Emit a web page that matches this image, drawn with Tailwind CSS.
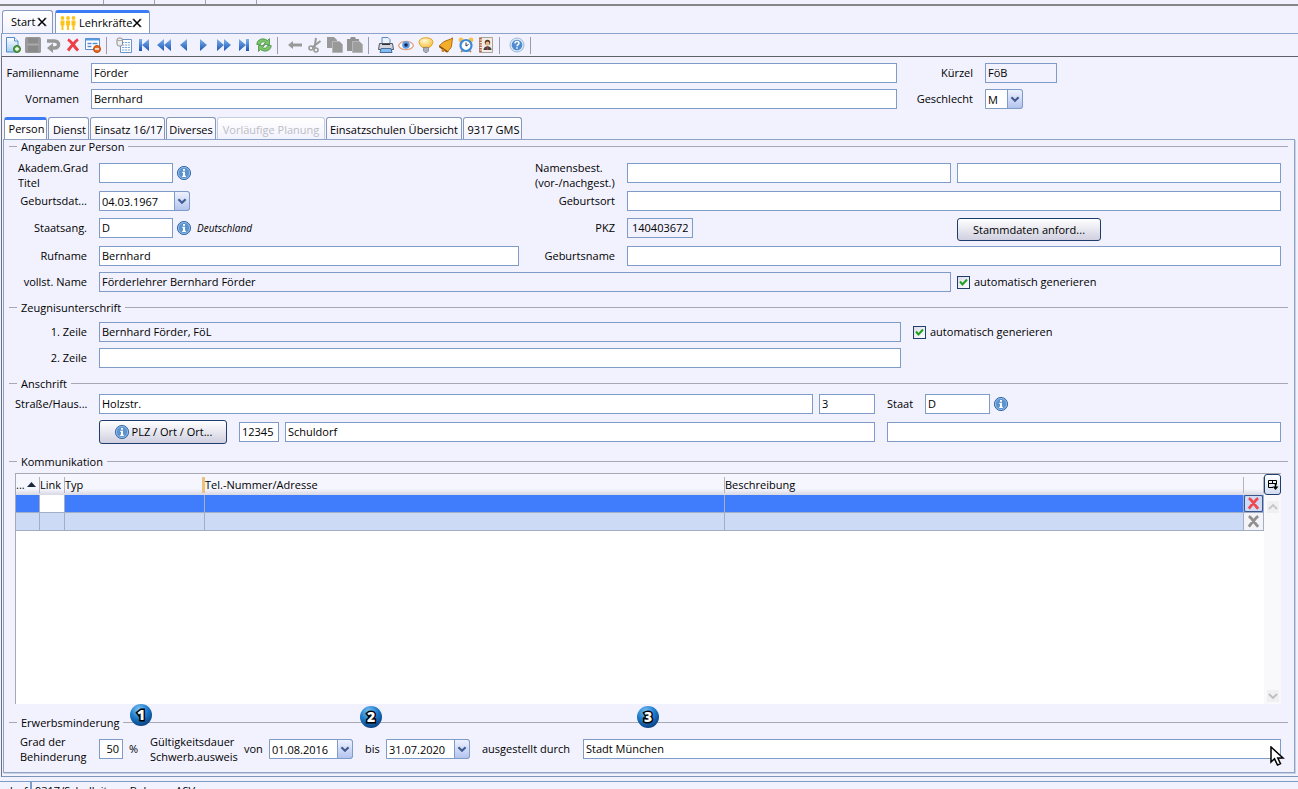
<!DOCTYPE html>
<html lang="de">
<head>
<meta charset="utf-8">
<title>Lehrkräfte</title>
<script src="https://cdn.jsdelivr.net/npm/@tailwindcss/browser@4"></script>
</head>
<body class="h-screen overflow-hidden flex flex-col bg-[#f2f2fe] text-black text-[11px] leading-5 font-['Open_Sans','Noto_Sans',sans-serif]">

<svg class="absolute w-0 h-0" aria-hidden="true">
  <defs>
    <linearGradient id="blue" x1="0" y1="0" x2="0" y2="1"><stop offset="0" stop-color="#7db2ee"/><stop offset="1" stop-color="#1c55b4"/></linearGradient>
    <linearGradient id="paper" x1="0" y1="0" x2="0" y2="1"><stop offset="0" stop-color="#ffffff"/><stop offset="1" stop-color="#a4cdf3"/></linearGradient>
    <radialGradient id="ball" cx=".4" cy=".25" r=".8"><stop offset="0" stop-color="#7cc4f4"/><stop offset=".5" stop-color="#1f7ccc"/><stop offset="1" stop-color="#083a78"/></radialGradient>
    <radialGradient id="lamp" cx=".4" cy=".3" r=".8"><stop offset="0" stop-color="#fffbd8"/><stop offset="1" stop-color="#f6b92c"/></radialGradient>
  </defs>
  <symbol id="info" viewBox="0 0 16 16"><circle cx="8" cy="8" r="6.600" fill="#5b93cf" stroke="#3c6ca8"/><circle cx="8" cy="8" r="5.600" fill="none" stroke="#a9caec" stroke-width=".7"/><path d="M7 4h2v1.700H7zM6.300 6.800H9v4h.9V12H6.200v-1.200H7V8h-.7z" fill="#fff"/></symbol>
  <symbol id="chev" viewBox="0 0 15 20"><path d="M3.500 8l4 4 4-4" fill="none" stroke="#435d92" stroke-width="2.400"/></symbol>
  <symbol id="close" viewBox="0 0 10 10"><path d="M1.500 1.500l7 7M8.500 1.500l-7 7" stroke="#000" stroke-width="1.500"/><path d="M.5 1.300h2M7.500 1.300h2M.5 8.700h2M7.500 8.700h2" stroke="#000" stroke-width=".7"/></symbol>
  <symbol id="cross" viewBox="0 0 16 16"><path d="M3 2.500c2 1 3.500 3 5 5 1.500-2 3-4 5-5M3 13.500c1.500-2 3-4 5-6 1.500 2 3 4 5 6" fill="none" stroke="currentColor" stroke-width="3"/></symbol>
</svg>

<!-- upper window edge -->
<div class="shrink-0 h-[6px] border-b-2 border-[#85858a] flex">
  <span class="w-[104px] border-r border-[#a0a0b0]"></span><span class="w-[51px] border-r border-[#a0a0b0]"></span><span class="w-[51px] border-r border-[#a0a0b0]"></span><span class="w-[51px] border-r border-[#a0a0b0]"></span>
</div>

<!-- window tabs -->
<nav class="shrink-0 h-[27px] flex items-end gap-0.5 pl-0.5" aria-label="Fenster">
  <button type="button" class="h-[23px] w-[51px] flex items-center gap-0.5 pl-2 bg-linear-to-b from-white to-[#f2f2fe] border border-b-0 border-[#8398ba] rounded-t-[3px]">Start<svg class="size-[10px] shrink-0"><use href="#close"/></svg></button>
  <button type="button" class="h-[23px] w-[95px] leading-[18px] flex items-center pl-[3px] bg-white border border-b-0 border-t-3 border-[#8398ba] border-t-[#3b7bf5] rounded-t-[3px]">
    <svg class="w-[18px] h-4 mr-0.5 shrink-0" viewBox="0 0 18 16"><g fill="#fbc31c"><circle cx="3.500" cy="3" r="1.900"/><circle cx="9" cy="3" r="1.900"/><circle cx="14.500" cy="3" r="1.900"/><path d="M1.500 5.500h4v5h-1V15h-2v-4.500h-1zM7 5.500h4v5h-1V15H8v-4.500H7zM12.500 5.500h4v5h-1V15h-2v-4.500h-1z"/></g></svg>Lehrkräfte<svg class="size-[10px] shrink-0"><use href="#close"/></svg></button>
</nav>

<!-- toolbar -->
<div role="toolbar" class="shrink-0 h-6 flex items-center pl-px ml-px border-t border-b border-l border-t-[#8ba3cb] border-b-[#606068] border-l-[#8398ba]">
  <button type="button" class="w-5 flex justify-center" aria-label="Neu"><svg class="size-4" viewBox="0 0 16 16"><path d="M1.500.5h8l3.500 3.500v11H1.500z" fill="url(#paper)" stroke="#4f8ccb"/><path d="M9.500.5V4H13" fill="#fff" stroke="#4f8ccb"/><circle cx="12" cy="12" r="3.500" fill="#5aa844" stroke="#36762a"/><path d="M12 10v4M10 12h4" stroke="#fff" stroke-width="1.300"/></svg></button>
  <button type="button" class="w-5 flex justify-center" aria-label="Speichern"><svg class="size-4" viewBox="0 0 16 16"><path d="M0 1.500L1 0h14l1 1.500V15l-1 1H1l-1-1z" fill="#999"/><path d="M3 1h10v5H3zM3 9h10v6H3z" fill="#8a8a8a"/><path d="M2 7.500h12" stroke="#aaa"/></svg></button>
  <button type="button" class="w-5 flex justify-center" aria-label="Rückgängig"><svg class="size-4" viewBox="0 0 16 16"><path d="M2 4h7.500c5.500 0 5.500 7 0 7H7" fill="none" stroke="#979797" stroke-width="3.400"/><path d="M8 6v10l-6-5z" fill="#979797"/></svg></button>
  <button type="button" class="w-5 flex justify-center text-[#ee4044]" aria-label="Löschen"><svg class="size-4"><use href="#cross"/></svg></button>
  <button type="button" class="w-5 flex justify-center" aria-label="Zeile entfernen"><svg class="size-4" viewBox="0 0 16 16"><path d="M.5 1.500h14v11H.5z" fill="#fff" stroke="#5b8cc9"/><path d="M.5 1.500h14v2H.5z" fill="#5b9be0"/><path d="M2.500 6.500h4m1 0h5M2.500 9.500h4" stroke="#5b8cc9" stroke-width="1.500"/><circle cx="12" cy="12" r="3.500" fill="#ee6a1e" stroke="#b94a10"/><path d="M10 12h4" stroke="#fff" stroke-width="1.500"/></svg></button>
  <span class="w-[11px] pl-[3px]"><span class="block w-px h-[17px] bg-[#9a9aae]"></span></span>
  <button type="button" class="w-5 flex justify-center" aria-label="Liste"><svg class="size-4" viewBox="0 0 16 16"><path d="M4.500 2.500h11v13h-11z" fill="#fff" stroke="#6a93c6"/><path d="M6 5.500h8M6 8h8M6 10.500h8M6 13h8" stroke="#7ba6da"/><path d="M8.500 4v11M11.500 4v11" stroke="#fff" stroke-width=".7"/><rect x="1" y="1" width="5.500" height="8" rx="2" fill="#eee" stroke="#8d8d8d"/><path d="M1 3.500h5.500" stroke="#aaa"/></svg></button>
  <button type="button" class="w-5 flex justify-center" aria-label="Erster"><svg class="size-4" viewBox="0 0 16 16"><path d="M3 2h3v12H3zM13 2v12L6 8z" fill="url(#blue)"/></svg></button>
  <button type="button" class="w-5 flex justify-center" aria-label="Schnell zurück"><svg class="size-4" viewBox="0 0 16 16"><path d="M8 2v12L1 8zM15 2v12L8 8z" fill="url(#blue)"/></svg></button>
  <button type="button" class="w-5 flex justify-center" aria-label="Zurück"><svg class="size-4" viewBox="0 0 16 16"><path d="M11 2v12L4 8z" fill="url(#blue)"/></svg></button>
  <button type="button" class="w-5 flex justify-center" aria-label="Vor"><svg class="size-4" viewBox="0 0 16 16"><path d="M4 2v12l7-6z" fill="url(#blue)"/></svg></button>
  <button type="button" class="w-5 flex justify-center" aria-label="Schnell vor"><svg class="size-4" viewBox="0 0 16 16"><path d="M1 2v12l7-6zM8 2v12l7-6z" fill="url(#blue)"/></svg></button>
  <button type="button" class="w-5 flex justify-center" aria-label="Letzter"><svg class="size-4" viewBox="0 0 16 16"><path d="M10 2h3v12h-3zM3 2v12l7-6z" fill="url(#blue)"/></svg></button>
  <button type="button" class="w-5 flex justify-center" aria-label="Aktualisieren"><svg class="size-4" viewBox="0 0 16 16"><path d="M.8 7.500c0-5 6.200-7.500 10.700-4L13.500 1.500v6H7.500L9.500 5.500C7.500 4 5 5 4.500 7.500zM15.200 8.500c0 5-6.200 7.500-10.700 4L2.500 14.500v-6H8.500L6.500 10.500C8.500 12 11 11 11.500 8.500z" fill="#7cc468" stroke="#3b8538" stroke-width=".7"/></svg></button>
  <span class="w-[11px] pl-[3px]"><span class="block w-px h-[17px] bg-[#9a9aae]"></span></span>
  <button type="button" class="w-5 flex justify-center" aria-label="Pfeil"><svg class="size-4" viewBox="0 0 16 16"><path d="M1 8l5-4v2.500h9v3H6V12z" fill="#999"/></svg></button>
  <button type="button" class="w-5 flex justify-center" aria-label="Ausschneiden"><svg class="size-4" viewBox="0 0 16 16"><path d="M9 1L7.500 11M13.500 4L5 10.500" stroke="#999" stroke-width="2"/><circle cx="4" cy="11" r="2" fill="none" stroke="#999" stroke-width="1.600"/><circle cx="9" cy="13" r="2" fill="none" stroke="#999" stroke-width="1.600"/></svg></button>
  <button type="button" class="w-5 flex justify-center" aria-label="Kopieren"><svg class="size-4" viewBox="0 0 16 16"><path d="M0 0h7l3 3v8H0z" fill="#999"/><path d="M5.500 4.500h7l3 3v8h-10z" fill="#999" stroke="#b8b8b8"/></svg></button>
  <button type="button" class="w-5 flex justify-center" aria-label="Einfügen"><svg class="size-4" viewBox="0 0 16 16"><path d="M0 2h3l1-2h4l1 2h3v12H0z" fill="#929292"/><path d="M5.500 4.500h7l3 3v8h-10z" fill="#9d9d9d" stroke="#b8b8b8"/></svg></button>
  <span class="w-[11px] pl-[3px]"><span class="block w-px h-[17px] bg-[#9a9aae]"></span></span>
  <button type="button" class="w-5 flex justify-center" aria-label="Drucken"><svg class="size-4" viewBox="0 0 16 16"><path d="M4 .5h6l2 2V8H4z" fill="#e8f3ff" stroke="#5c88bb"/><path d="M1.500 6.500h13l1 6h-15z" fill="#d2d5dd" stroke="#53565e"/><path d="M4 7.500h8" stroke="#333"/><path d="M3 11.500h10l1 4H2z" fill="#82bdf2" stroke="#4b6c9a"/></svg></button>
  <button type="button" class="w-5 flex justify-center" aria-label="Ansicht"><svg class="size-4" viewBox="0 0 16 16"><path d="M.5 8.500C3 3 13 3 15.500 8.500 13 14 3 14 .5 8.500z" fill="#fff" stroke="#dfa285" stroke-width="1.300"/><circle cx="8" cy="8" r="3.800" fill="#5d9be4"/><circle cx="8" cy="8" r="1.800" fill="#14285c"/></svg></button>
  <button type="button" class="w-5 flex justify-center" aria-label="Hinweis"><svg class="size-4" viewBox="0 0 16 16"><path d="M8 .8c-8.500 0-8.500 6-3.500 9.700h7c5-3.700 5-9.700-3.500-9.700z" fill="url(#lamp)" stroke="#e3a12d"/><path d="M5.500 10.500h5v3.500l-1.500 1.500H7L5.500 14z" fill="#a9aebb" stroke="#777d8c" stroke-width=".7"/></svg></button>
  <button type="button" class="w-5 flex justify-center" aria-label="Signal"><svg class="size-4" viewBox="0 0 16 16"><path d="M14.500.8c-2 2-6 2.200-9 4.200-2 1.500-3 3-4.500 4l9 6c0-2 3-3 3.500-6 .5-3 .5-5 1-8.200z" fill="#f3ae2a" stroke="#b06c12"/><path d="M1.500 9.500l8 5.500" stroke="#8f520c" stroke-width="1.600"/><circle cx="5" cy="13.500" r="1.500" fill="#cf8418"/></svg></button>
  <button type="button" class="w-5 flex justify-center" aria-label="Termine"><svg class="size-4" viewBox="0 0 16 16"><circle cx="3" cy="3" r="2.400" fill="#f6c049"/><circle cx="13" cy="3" r="2.400" fill="#f6c049"/><path d="M3 15l2-2M13 15l-2-2" stroke="#a77b30" stroke-width="1.500"/><circle cx="8" cy="8.500" r="5.500" fill="#fff" stroke="#3f89d8" stroke-width="2.200"/><path d="M8 5.500v3.500l2.500-1.500" fill="none" stroke="#333"/></svg></button>
  <button type="button" class="w-5 flex justify-center" aria-label="Adressbuch"><svg class="size-4" viewBox="0 0 16 16"><path d="M1.500.5h13v15h-13z" fill="#f1ece6" stroke="#a9a39d"/><path d="M2.500 1v14" stroke="#b5613b" stroke-width="2.500" stroke-dasharray="1.500 1"/><circle cx="9.500" cy="5.500" r="2.700" fill="#5a3520"/><circle cx="9.500" cy="6.500" r="1.900" fill="#edb888"/><path d="M5.500 13c0-5 8-5 8 0z" fill="#444"/><path d="M9.500 9.500V13" stroke="#c33"/></svg></button>
  <span class="w-[11px] pl-[3px]"><span class="block w-px h-[17px] bg-[#9a9aae]"></span></span>
  <button type="button" class="w-5 flex justify-center" aria-label="Hilfe"><svg class="size-4" viewBox="0 0 16 16"><circle cx="8" cy="8" r="7" fill="#dbe9f8" stroke="#9db9d8"/><circle cx="8" cy="8" r="5.300" fill="#4f8bd0"/><path d="M6 6.500c0-2.500 4-2.500 4-.3C10 7.700 8 7.500 8 9.300M8 10.300v1.500" fill="none" stroke="#fff" stroke-width="1.500"/></svg></button>
  <span class="w-[11px] pl-[3px]"><span class="block w-px h-[17px] bg-[#9a9aae]"></span></span>
</div>

<main class="flex-1 min-h-0 flex flex-col ml-px border-l border-b border-l-[#6a7080] border-b-[#7d95bd]">
  <!-- name of the teacher -->
  <div class="shrink-0 flex pt-1.5 text-[11px]">
    <div class="flex-1 grid grid-cols-[77px_1fr] gap-x-3 gap-y-1.5">
      <label for="fam" class="text-right">Familienname</label><input id="fam" value="Förder" class="h-5 w-full min-w-0 px-0.5 bg-white border border-[#7f9bc8]">
      <label for="vor" class="text-right">Vornamen</label><input id="vor" value="Bernhard" class="h-5 w-full min-w-0 px-0.5 bg-white border border-[#7f9bc8]">
    </div>
    <div class="w-[401px] grid grid-cols-[76px_1fr] gap-x-3 gap-y-1.5">
      <label for="krz" class="text-right">Kürzel</label><input id="krz" readonly value="FöB" class="h-5 w-18 px-0.5 bg-[#f2f2fe] border border-[#7f9bc8]">
      <label for="sex" class="text-right">Geschlecht</label>
      <div class="relative w-[38px] h-5"><select id="sex" class="appearance-none block h-5 w-full px-0.5 bg-white border border-[#7f9bc8] rounded-r-[3px]"><option>M</option><option>W</option></select><svg class="absolute right-0 top-0 w-4 h-5 border border-[#7f9bc8] rounded-r-[3px] bg-linear-to-b from-[#eef2ff] to-[#b4c4ee] pointer-events-none"><use href="#chev"/></svg></div>
    </div>
  </div>

  <!-- page tabs -->
  <div role="tablist" class="shrink-0 flex items-end gap-px pl-0.5 mt-2 h-[22px] whitespace-nowrap">
    <button type="button" role="tab" aria-selected="true" class="h-[22px] w-[43px] pl-0.5 pb-0.5 leading-4 text-center bg-white border border-b-0 border-t-3 border-[#8398ba] border-t-[#3b7bf5] rounded-t-[3px]">Person</button>
    <button type="button" role="tab" class="h-[22px] w-[41px] pt-0.5 pl-0.5 text-center bg-linear-to-b from-white to-[#f2f2fe] border border-b-0 border-[#8398ba] rounded-t-[3px]">Dienst</button>
    <button type="button" role="tab" class="h-[22px] w-[75px] pt-0.5 pl-0.5 text-center bg-linear-to-b from-white to-[#f2f2fe] border border-b-0 border-[#8398ba] rounded-t-[3px]">Einsatz 16/17</button>
    <button type="button" role="tab" class="h-[22px] w-[50px] pt-0.5 text-center bg-linear-to-b from-white to-[#f2f2fe] border border-b-0 border-[#8398ba] rounded-t-[3px]">Diverses</button>
    <button type="button" role="tab" disabled class="h-[22px] w-[108px] pt-0.5 text-center text-[#bcbcc4] bg-linear-to-b from-white to-[#f2f2fe] border border-b-0 border-[#c3cddf] rounded-t-[3px]">Vorläufige Planung</button>
    <button type="button" role="tab" class="h-[22px] w-[136px] pt-0.5 text-center bg-linear-to-b from-white to-[#f2f2fe] border border-b-0 border-[#8398ba] rounded-t-[3px]">Einsatzschulen Übersicht</button>
    <button type="button" role="tab" class="h-[22px] w-[59px] pt-0.5 pl-0.5 text-center bg-linear-to-b from-white to-[#f2f2fe] border border-b-0 border-[#8398ba] rounded-t-[3px]">9317 GMS</button>
  </div>

  <div class="flex-1 min-h-0 flex flex-col ml-px mr-[3px] mb-[3px] pl-[5px] pr-1.5 border border-[#8ea2c4] shadow-[1px_1px_0_#c9d3e6]">
    <!-- Angaben zur Person -->
    <h2 class="shrink-0 h-[13px] leading-[12px] flex gap-1 items-center before:w-2 before:h-px before:bg-[#a8a8b2] after:flex-1 after:h-px after:bg-[#a8a8b2]">Angaben zur Person</h2>
    <div class="shrink-0 mt-[7px] pl-1.5 pr-px grid grid-cols-[84px_432px_96px_1fr_1fr] grid-rows-[31px_27px_28px_26px_20px] items-start">
      <label for="titel" class="leading-[15px] pl-[3px]">Akadem.Grad<br>Titel</label>
      <div class="flex items-center gap-[3px] pt-[3px]"><input id="titel" class="h-5 w-[74px] px-0.5 bg-white border border-[#7f9bc8]"><svg class="size-4"><use href="#info"/></svg></div>
      <label for="nb" class="leading-[15px] pl-1">Namensbest.<br>(vor-/nachgest.)</label>
      <div class="pt-[3px] pr-1.5"><input id="nb" class="block h-5 w-full px-0.5 bg-white border border-[#7f9bc8]"></div>
      <div class="pt-[3px] pr-1.5"><input aria-label="nachgestellt" class="block h-5 w-full px-0.5 bg-white border border-[#7f9bc8]"></div>

      <label for="geb" class="text-right pr-3">Geburtsdat...</label>
      <div class="relative w-[91px] h-5"><select id="geb" class="appearance-none block h-5 w-full px-0.5 bg-white border border-[#7f9bc8] rounded-r-[3px]"><option>04.03.1967</option></select><svg class="absolute right-0 top-0 w-4 h-5 border border-[#7f9bc8] rounded-r-[3px] bg-linear-to-b from-[#eef2ff] to-[#b4c4ee] pointer-events-none"><use href="#chev"/></svg></div>
      <label for="ort" class="text-right pr-3">Geburtsort</label>
      <div class="col-span-2 pr-1.5"><input id="ort" class="block h-5 w-full px-0.5 bg-white border border-[#7f9bc8]"></div>

      <label for="sta" class="text-right pr-3">Staatsang.</label>
      <div class="flex items-center gap-[3px]"><input id="sta" value="D" class="h-5 w-[74px] px-0.5 bg-white border border-[#7f9bc8]"><svg class="size-4"><use href="#info"/></svg><i class="pl-0.5 text-[10px]">Deutschland</i></div>
      <label for="pkz" class="text-right pr-3">PKZ</label>
      <input id="pkz" readonly value="140403672" class="h-5 w-[66px] px-1 bg-[#f2f2fe] border border-[#7f9bc8]">
      <button type="button" class="h-[23px] w-36 leading-[21px] bg-linear-to-b from-white to-[#d0d0e0] border border-[#1f3e6e] rounded-[3px]">Stammdaten anford...</button>

      <label for="ruf" class="text-right pr-3">Rufname</label>
      <div class="pr-3"><input id="ruf" value="Bernhard" class="block h-5 w-full px-0.5 bg-white border border-[#7f9bc8]"></div>
      <label for="gn" class="text-right pr-3">Geburtsname</label>
      <div class="col-span-2 pr-1.5"><input id="gn" class="block h-5 w-full px-0.5 bg-white border border-[#7f9bc8]"></div>

      <label for="voll" class="text-right pr-3">vollst. Name</label>
      <div class="col-span-3 pr-1.5"><input id="voll" readonly value="Förderlehrer Bernhard Förder" class="block h-5 w-full px-0.5 bg-[#f2f2fe] border border-[#7f9bc8]"></div>
      <label class="flex items-center gap-1 h-5"><span class="relative size-[13px]"><input type="checkbox" checked class="peer block appearance-none size-[13px] bg-linear-to-br from-[#dcdce8] to-white border border-[#1f3e6e]"><svg class="absolute inset-0 size-[13px] hidden peer-checked:block pointer-events-none" viewBox="0 0 13 13"><path d="M3 5.500l2.500 3L10 3.500" fill="none" stroke="#21a121" stroke-width="2"/></svg></span>automatisch generieren</label>
    </div>

    <!-- Zeugnisunterschrift -->
    <h2 class="shrink-0 mt-2 h-[15px] leading-[14px] flex gap-1 items-center before:w-2 before:h-px before:bg-[#a8a8b2] after:flex-1 after:h-px after:bg-[#a8a8b2]">Zeugnisunterschrift</h2>
    <div class="shrink-0 mt-[7px] pl-1.5 pr-[7px] grid grid-cols-[72px_1fr_368px] gap-x-3 gap-y-1.5">
      <label for="z1" class="text-right">1. Zeile</label>
      <input id="z1" readonly value="Bernhard Förder, FöL" class="h-5 min-w-0 px-0.5 bg-[#f2f2fe] border border-[#7f9bc8]">
      <label class="flex items-center gap-1 h-5"><span class="relative size-[13px]"><input type="checkbox" checked class="peer block appearance-none size-[13px] bg-linear-to-br from-[#dcdce8] to-white border border-[#1f3e6e]"><svg class="absolute inset-0 size-[13px] hidden peer-checked:block pointer-events-none" viewBox="0 0 13 13"><path d="M3 5.500l2.500 3L10 3.500" fill="none" stroke="#21a121" stroke-width="2"/></svg></span>automatisch generieren</label>
      <label for="z2" class="text-right">2. Zeile</label>
      <input id="z2" class="h-5 min-w-0 px-0.5 bg-white border border-[#7f9bc8]">
    </div>

    <!-- Anschrift -->
    <h2 class="shrink-0 mt-2 h-[15px] leading-[14px] flex gap-1 items-center before:w-2 before:h-px before:bg-[#a8a8b2] after:flex-1 after:h-px after:bg-[#a8a8b2]">Anschrift</h2>
    <div class="shrink-0 mt-[3px] pl-1.5 pr-[7px] grid grid-cols-[72px_1fr_394px] gap-x-3 gap-y-1.5">
      <label for="str" class="text-right">Straße/Haus...</label>
      <div class="flex gap-1.5"><input id="str" value="Holzstr." class="h-5 flex-1 min-w-0 px-0.5 bg-white border border-[#7f9bc8]"><input aria-label="Hausnummer" value="3" class="h-5 w-14 px-0.5 bg-white border border-[#7f9bc8]"></div>
      <div class="flex items-center"><label for="staat" class="w-[38px]">Staat</label><input id="staat" value="D" class="h-5 w-[65px] mr-[3px] px-0.5 bg-white border border-[#7f9bc8]"><svg class="size-4"><use href="#info"/></svg></div>
      <div class="col-start-2 flex items-center gap-1.5"><button type="button" class="h-6 w-32 mr-1.5 flex items-center justify-center gap-0.5 bg-linear-to-b from-white to-[#d0d0e0] border border-[#1f3e6e] rounded-[3px]"><svg class="size-4"><use href="#info"/></svg>PLZ / Ort / Ort...</button><input aria-label="PLZ" value="12345" class="h-5 w-10 px-0.5 bg-white border border-[#7f9bc8]"><input aria-label="Ort" value="Schuldorf" class="h-5 flex-1 min-w-0 px-0.5 bg-white border border-[#7f9bc8]"></div>
      <div class="flex items-center"><input aria-label="Ortsteil" class="h-5 w-full px-0.5 bg-white border border-[#7f9bc8]"></div>
    </div>

    <!-- Kommunikation -->
    <h2 class="shrink-0 mt-2.5 h-[15px] leading-[14px] flex gap-1 items-center before:w-2 before:h-px before:bg-[#a8a8b2] after:flex-1 after:h-px after:bg-[#a8a8b2]">Kommunikation</h2>
    <div class="flex-1 min-h-0 mt-1 ml-1.5 mr-[7px] flex bg-white border-t border-l border-[#a8a8b2]">
      <div class="flex-1 min-w-0">
        <table class="w-full table-fixed border-separate border-spacing-0 text-left">
          <colgroup><col class="w-6"><col class="w-[25px]"><col class="w-[140px]"><col class="w-[520px]"><col><col class="w-5"></colgroup>
          <thead>
            <tr class="h-[21px] leading-5 bg-linear-to-b from-[#f6f6ff] from-70% to-[#d8d8e4] [&>th]:font-normal [&>th]:p-0 [&>th]:whitespace-nowrap">
              <th><span class="flex items-center gap-0.5 border-r border-[#b4b4c0] h-4">...<svg class="w-[9px] h-[5px]" viewBox="0 0 9 5"><path d="M0 5L4.500 0 9 5z" fill="#1b2740"/></svg></span></th>
              <th><span class="flex items-center border-r border-[#b4b4c0] h-4">Link</span></th>
              <th><span class="flex items-center border-r-3 border-[#ecc27c] h-4">Typ</span></th>
              <th><span class="flex items-center border-r border-[#b4b4c0] h-4">Tel.-Nummer/Adresse</span></th>
              <th><span class="flex items-center border-r border-[#b4b4c0] h-4">Beschreibung</span></th>
              <th><span class="block border-r border-[#b4b4c0] h-4"></span></th>
            </tr>
          </thead>
          <tbody class="[&_td]:p-0 [&_td]:border-r [&_td]:border-b [&_td]:border-[#a3adc4]">
            <tr class="h-[18px] bg-[#3f7dfd]"><td></td><td class="bg-white"></td><td></td><td></td><td></td>
              <td><button type="button" aria-label="Zeile löschen" class="w-full h-[17px] flex items-center justify-center text-[#f0494e] bg-[#cfdcf8] border border-[#3a5688] rounded-[2px]"><svg class="size-[15px]"><use href="#cross"/></svg></button></td></tr>
            <tr class="h-[18px] bg-[#ccdaf6]"><td></td><td></td><td></td><td></td><td></td>
              <td class="bg-[#f4f4f8]"><button type="button" aria-label="Zeile löschen" class="w-full h-[17px] flex items-center justify-center text-[#909090]"><svg class="size-[15px]"><use href="#cross"/></svg></button></td></tr>
          </tbody>
        </table>
      </div>
      <div class="w-[17px] flex flex-col items-center bg-[#f9f9fc]">
        <button type="button" aria-label="Spalten" class="h-[21px] w-[17px] flex items-center justify-center bg-linear-to-b from-white to-[#d4dcf0] border border-[#1f3e6e] rounded-[3px]"><svg class="size-[13px]" viewBox="0 0 13 13"><path d="M7 9.500H2.500v-7h8v4M2.500 5.500h8M6.500 2.500v3" fill="none" stroke="#000"/><path d="M9.500 6v3" stroke="#000" stroke-width="1.500"/><path d="M6.500 8.500h6L9.500 12z"/></svg></button>
        <svg class="w-3 h-3 mt-1.5 bg-[#f0f0f2]" viewBox="0 0 12 12"><path d="M2 8l4-4 4 4" fill="none" stroke="#c4c4cc" stroke-width="1.800"/></svg>
        <svg class="w-3 h-3 mt-auto mb-0.5 bg-[#f0f0f2]" viewBox="0 0 12 12"><path d="M2 4l4 4 4-4" fill="none" stroke="#bcbcc4" stroke-width="1.800"/></svg>
      </div>
    </div>

    <!-- Erwerbsminderung -->
    <div class="shrink-0 mt-[11px] relative">
      <h2 class="h-[15px] leading-[14px] flex gap-1 items-center before:w-2 before:h-px before:bg-[#a8a8b2] after:flex-1 after:h-px after:bg-[#a8a8b2]">Erwerbsminderung</h2>
      <svg class="absolute left-[120px] -top-3 size-6" viewBox="0 0 24 24"><circle cx="12" cy="12" r="11" fill="url(#ball)"/><text x="12" y="17" text-anchor="middle" class="font-['Open_Sans',sans-serif] text-[14px] font-extrabold" fill="#fff" stroke="#000" stroke-width="3" paint-order="stroke">1</text></svg>
      <svg class="absolute left-[350px] -top-2.5 size-6" viewBox="0 0 24 24"><circle cx="12" cy="12" r="11" fill="url(#ball)"/><text x="12" y="17" text-anchor="middle" class="font-['Open_Sans',sans-serif] text-[14px] font-extrabold" fill="#fff" stroke="#000" stroke-width="3" paint-order="stroke">2</text></svg>
      <svg class="absolute left-[627px] -top-2.5 size-6" viewBox="0 0 24 24"><circle cx="12" cy="12" r="11" fill="url(#ball)"/><text x="12" y="17" text-anchor="middle" class="font-['Open_Sans',sans-serif] text-[14px] font-extrabold" fill="#fff" stroke="#000" stroke-width="3" paint-order="stroke">3</text></svg>
      <svg class="absolute right-[3px] top-[31px] w-4 h-5" viewBox="0 0 16 20"><path d="M2 1v15l3.500-3.200L8.500 19l3-1.300L8.800 12H14z" fill="#fff" stroke="#000" stroke-width="1.500"/></svg>
    </div>
    <div class="shrink-0 mt-1 mb-2 pl-1.5 pr-[7px] h-[30px] flex items-center whitespace-nowrap">
      <label for="grad" class="w-[84px] pl-[5px] leading-[15px]">Grad der<br>Behinderung</label>
      <input id="grad" value="50" class="h-5 w-6 px-[3px] text-right bg-white border border-[#7f9bc8]">
      <span class="w-[27px] pl-1.5">%</span>
      <span class="w-[94px] leading-[15px]">Gültigkeitsdauer<br>Schwerb.ausweis</span>
      <label for="von" class="w-[25px]">von</label>
      <div class="relative w-[84px] h-5"><select id="von" class="appearance-none block h-5 w-full px-0.5 bg-white border border-[#7f9bc8] rounded-r-[3px]"><option>01.08.2016</option></select><svg class="absolute right-0 top-0 w-4 h-5 border border-[#7f9bc8] rounded-r-[3px] bg-linear-to-b from-[#eef2ff] to-[#b4c4ee] pointer-events-none"><use href="#chev"/></svg></div>
      <label for="bis" class="w-[33px] pl-3">bis</label>
      <div class="relative w-[84px] h-5"><select id="bis" class="appearance-none block h-5 w-full px-0.5 bg-white border border-[#7f9bc8] rounded-r-[3px]"><option>31.07.2020</option></select><svg class="absolute right-0 top-0 w-4 h-5 border border-[#7f9bc8] rounded-r-[3px] bg-linear-to-b from-[#eef2ff] to-[#b4c4ee] pointer-events-none"><use href="#chev"/></svg></div>
      <label for="durch" class="w-[113px] pl-3">ausgestellt durch</label>
      <input id="durch" value="Stadt München" class="h-5 flex-1 min-w-0 px-0.5 bg-white border border-[#7f9bc8]">
    </div>
  </div>
</main>

<!-- status bar -->
<footer class="shrink-0 mt-1 h-2 border-t border-[#7f9bc8] overflow-hidden flex leading-[18px]">
  <span class="w-8 pl-1.5 border-r-2 border-[#7f9bc8]">dorf</span><span class="pl-[3px]">9317/Schulleitung Bohnen, ASV</span>
</footer>
</body>
</html>
